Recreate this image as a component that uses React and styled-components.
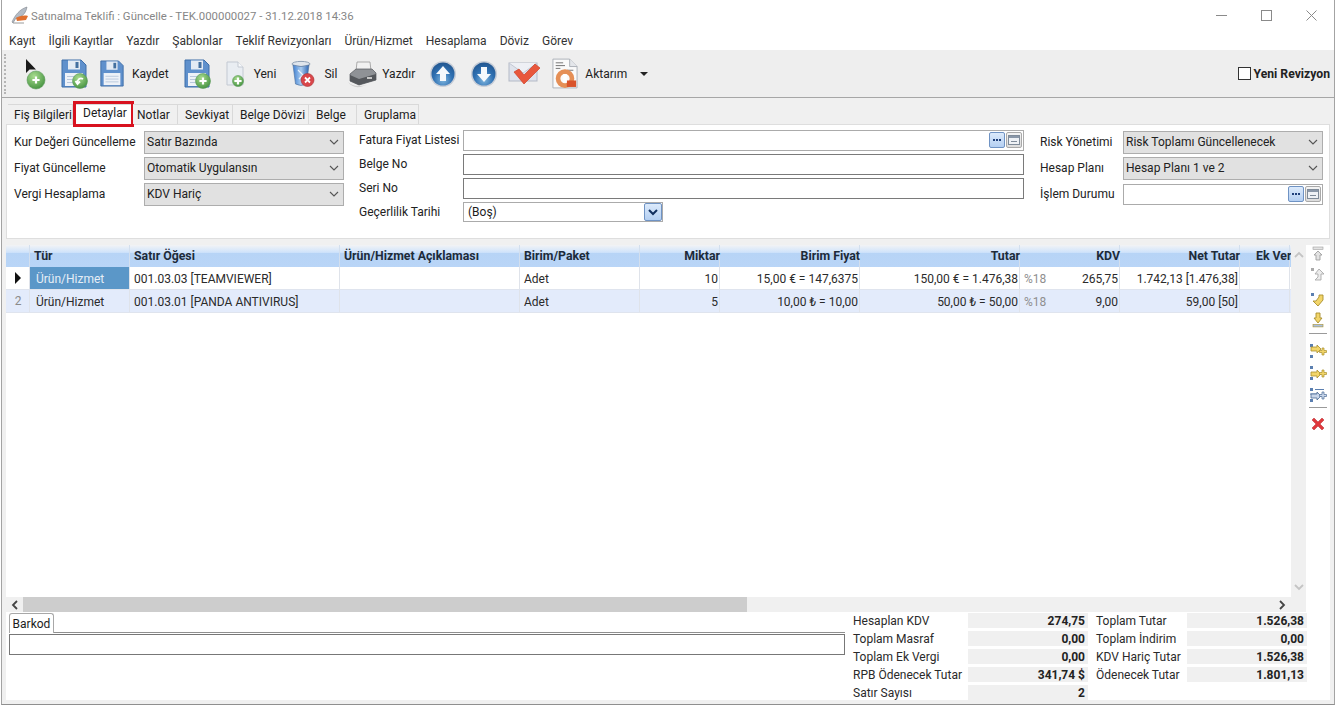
import React from "react";
import styled, { createGlobalStyle } from "styled-components";

const GlobalStyle = createGlobalStyle`
  html, body {
    margin: 0;
    padding: 0;
    background: #fff;
  }
  * {
    box-sizing: border-box;
  }
  body {
    font-family: Roboto, "Noto Sans", sans-serif;
    font-size: 12px;
    color: #1c1c1c;
  }
`;

const Window = styled.div`
  width: 1334px;
  height: 705px;
  margin-left: 1px;
  display: flex;
  flex-direction: column;
  background: #f0f0f0;
  border-left: 1px solid #a3a3a3;
  border-right: 1px solid #a3a3a3;
  border-bottom: 1px solid #8f8f8f;
  overflow: hidden;
`;

const TitleBar = styled.div`
  height: 30px;
  background: #fff;
  display: flex;
  align-items: center;
  padding-left: 9px;
  color: #868686;
  flex: none;
`;

const TitleText = styled.span`
  margin-left: 2px;
  flex: 1;
  font-size: 11.4px;
  padding-top: 1px;
`;

const WinButton = styled.div`
  width: 45px;
  height: 30px;
  display: flex;
  align-items: center;
  justify-content: center;
`;

const MenuBar = styled.div`
  height: 20px;
  background: #fff;
  display: flex;
  align-items: center;
  gap: 13px;
  padding: 2px 0 0 7px;
  flex: none;
  color: #333;
`;

const ToolBar = styled.div`
  height: 48px;
  background: #eeeeee;
  border-bottom: 1px solid #a6a6a6;
  display: flex;
  align-items: center;
  padding: 0 4px 0 2px;
  flex: none;
`;

const Grip = styled.div`
  width: 2px;
  height: 40px;
  border-left: 2px dotted #b5b5b5;
  margin-right: 19px;
`;

const Tool = styled.div`
  display: flex;
  align-items: center;
  gap: ${(p) => p.$gap || 6}px;
  margin-left: ${(p) => p.$ml || 0}px;
  color: #222;
  line-height: 16px;
`;

const Caret = styled.div`
  width: 0;
  height: 0;
  margin: 0 0 0 13px;
  border-left: 4px solid transparent;
  border-right: 4px solid transparent;
  border-top: 4px solid #222;
`;

const Revision = styled.label`
  margin-left: auto;
  display: flex;
  align-items: center;
  gap: 3px;
  font-size: 12.2px;
  font-weight: 700;
  color: #222;
`;

const CheckBox = styled.span`
  width: 13px;
  height: 13px;
  background: #fff;
  border: 1px solid #333;
`;

const TabStrip = styled.div`
  display: flex;
  height: 20px;
  margin: 6px 0 0 6px;
  flex: none;
`;

const Tab = styled.div`
  position: relative;
  width: ${(p) => p.$w}px;
  display: flex;
  align-items: center;
  padding-left: ${(p) => p.$pl}px;
  background: ${(p) => (p.$active ? "#fff" : "#f0f0f0")};
  border: 1px solid #d9d9d9;
  border-left-width: ${(p) => (p.$active ? 1 : 0)}px;
  border-bottom: none;
  padding-bottom: ${(p) => (p.$active ? 3 : 0)}px;
  ${(p) =>
    p.$active &&
    `&::after {
      content: "";
      position: absolute;
      left: -1px;
      right: -2px;
      top: -4px;
      bottom: -3px;
      border: 3px solid #d8121f;
    }`}
`;

const FormPanel = styled.div`
  height: 115px;
  margin: 0 4px;
  flex: none;
  background: #fff;
  border: 1px solid #dedede;
  display: grid;
  grid-template-columns: 345px 681px 1fr;
  padding: 3px 0 0 7px;
`;

const FormColumn = styled.div`
  display: grid;
  grid-template-columns: ${(p) => p.$label}px ${(p) => p.$field}px;
  grid-auto-rows: ${(p) => p.$row}px;
  align-content: start;
  align-items: center;
  padding-top: ${(p) => p.$top || 0}px;
`;

const FormLabel = styled.div`
  color: #222;
  white-space: nowrap;
`;

const Select = styled.div`
  height: 23px;
  background: #e1e1e1;
  border: 1px solid #adadad;
  display: flex;
  align-items: center;
  justify-content: space-between;
  padding: 0 4px 0 2px;
  color: #222;
`;

const Field = styled.div`
  height: ${(p) => p.$h || 21}px;
  background: #fff;
  border: 1px solid ${(p) => p.$line || "#7a7a7a"};
  display: flex;
  align-items: center;
  justify-content: flex-end;
  gap: 1px;
  padding-right: 1px;
`;

const DateSelect = styled.div`
  width: 200px;
  height: 20px;
  background: #fff;
  border: 1px solid #ababab;
  display: flex;
  align-items: center;
  justify-content: space-between;
  padding-left: 4px;
`;

const BlueButton = styled.div`
  width: ${(p) => p.$w || 16}px;
  height: ${(p) => p.$h || 16}px;
  background: linear-gradient(#dceafb, #b4cff2);
  border: 1px solid #6f93c4;
  border-radius: 2px;
  display: flex;
  align-items: center;
  justify-content: center;
`;

const GreyButton = styled.div`
  width: 16px;
  height: 16px;
  background: linear-gradient(#f4f4f4, #dcdcdc);
  border: 1px solid #a9a9a9;
  border-radius: 2px;
  display: flex;
  align-items: center;
  justify-content: center;
`;

const GridArea = styled.div`
  flex: 1;
  margin: 6px 4px 0;
  min-height: 0;
  display: flex;
  background: #fff;
`;

const GridMain = styled.div`
  flex: 1;
  min-width: 0;
  display: flex;
  flex-direction: column;
`;

const GridBody = styled.div`
  flex: 1;
  min-height: 0;
  display: flex;
`;

const Table = styled.div`
  flex: 1;
  min-width: 0;
  overflow: hidden;
`;

const Row = styled.div`
  display: grid;
  grid-template-columns: 24px 100px 210px 180px 120px 80px 140px 160px 100px 120px 50px;
  height: ${(p) => p.$h}px;
  background: ${(p) => p.$bg};
  border-bottom: ${(p) => (p.$head ? "none" : "1px solid #dfe4ee")};
`;

const HeadCell = styled.div`
  font-size: 12.3px;
  font-weight: 700;
  color: #1d2b3a;
  padding: 2px 0 0 ${(p) => p.$pl || 4}px;
  text-align: ${(p) => (p.$right ? "right" : "left")};
  box-shadow: inset -1px 0 #d3dfee;
  line-height: 18px;
  white-space: nowrap;
`;

const Cell = styled.div`
  display: flex;
  align-items: center;
  justify-content: ${(p) => (p.$right ? "flex-end" : p.$split ? "space-between" : "flex-start")};
  padding: 1px 2px 0 ${(p) => p.$pl || 4}px;
  box-shadow: inset -1px 0 #dfe3ea;
  white-space: nowrap;
  color: ${(p) => (p.$selected ? "#e6eef6" : "#2a2a2a")};
  background: ${(p) => (p.$selected ? "#5b97c8" : "transparent")};
`;

const RowHeader = styled(Cell)`
  justify-content: center;
  color: #8a8a8a;
  padding: 0;
`;

const Muted = styled.span`
  color: #8f8f8f;
`;

const Arrow = styled.div`
  width: 0;
  height: 0;
  border-top: 6px solid transparent;
  border-bottom: 6px solid transparent;
  border-left: 6px solid #111;
`;

const VScroll = styled.div`
  width: 15px;
  background: #f0f0f0;
  flex: none;
  display: flex;
  flex-direction: column;
  justify-content: space-between;
  align-items: center;
  padding: 5px 0;
`;

const HScroll = styled.div`
  height: 15px;
  background: #f0f0f0;
  flex: none;
  display: flex;
  align-items: center;
  padding-right: 16px;
`;

const ScrollEnd = styled.div`
  width: 17px;
  flex: none;
  display: flex;
  justify-content: center;
`;

const ScrollTrack = styled.div`
  flex: 1;
  height: 15px;
`;

const ScrollThumb = styled.div`
  width: 724px;
  height: 15px;
  background: #cdcdcd;
`;

const SideBar = styled.div`
  width: 24px;
  flex: none;
  display: flex;
  flex-direction: column;
  align-items: center;
  padding-top: 1px;
`;

const SideIcon = styled.div`
  width: 18px;
  height: 16px;
  margin-top: ${(p) => p.$mt || 0}px;
  display: flex;
  justify-content: center;
`;

const SideRule = styled.div`
  width: 18px;
  height: 1px;
  background: #9a9a9a;
  margin-top: ${(p) => p.$mt}px;
`;

const Bottom = styled.div`
  height: 88px;
  flex: none;
  margin: 0 4px 4px;
  background: #fff;
  display: flex;
  padding: 1px 0 0 3px;
`;

const BarcodeArea = styled.div`
  width: 836px;
  flex: none;
`;

const BarcodeTabs = styled.div`
  height: 20px;
  border-bottom: 1px solid #8f8f8f;
`;

const BarcodeTab = styled.div`
  width: 45px;
  height: 20px;
  background: #fff;
  border: 1px solid #a8a8a8;
  border-bottom: none;
  border-radius: 3px 3px 0 0;
  display: flex;
  align-items: center;
  justify-content: center;
`;

const BarcodeInput = styled.div`
  height: 21px;
  margin-top: 1px;
  border: 1px solid #777;
`;

const Summary = styled.div`
  margin-left: 5px;
  display: grid;
  grid-template-columns: 118px 120px 99px 120px;
  grid-auto-rows: 15px;
  row-gap: 3px;
`;

const SumLabel = styled.div`
  padding: 1px 0 0 ${(p) => p.$pl || 3}px;
  line-height: 15px;
  white-space: nowrap;
  color: #2a2a2a;
`;

const SumValue = styled.div`
  background: #f0f0f0;
  font-weight: 700;
  text-align: right;
  padding-right: 3px;
  line-height: 16px;
  color: #222;
`;

const FeatherIcon = () => (
  <svg width="18" height="18" viewBox="0 0 18 18">
    <path d="M1 16 C4 9 9 3 16 1 C15 6 13 9 9 11 L5 12 L2 17 Z" fill="#b4bcc6" stroke="#7d838a" strokeWidth=".6" />
    <path d="M5 12 C8 10 13 9 17 10 L15 14 L6 15 Z" fill="#e0702f" />
    <path d="M2 17 H13" stroke="#9a9a9a" />
  </svg>
);

const Chevron = ({ color = "#555", up, right, left, size = 10, width = 1.1 }) => {
  const d = up
    ? "M1 7 L5 3 L9 7"
    : right
      ? "M3 1 L7 5 L3 9"
      : left
        ? "M7 1 L3 5 L7 9"
        : "M1 3 L5 7 L9 3";
  return (
    <svg width={size} height={size} viewBox="0 0 10 10">
      <path d={d} fill="none" stroke={color} strokeWidth={width} />
    </svg>
  );
};

const Badge = ({ cx = 24, cy = 24, r = 7, id, kind = "plus" }) => (
  <g>
    <defs>
      <radialGradient id={id} cx=".4" cy=".3" r=".8">
        <stop offset="0" stopColor="#a8dc8e" />
        <stop offset="1" stopColor="#3d8c3a" />
      </radialGradient>
    </defs>
    <circle cx={cx} cy={cy} r={r} fill={`url(#${id})`} stroke="#5d9a5a" strokeWidth=".6" />
    {kind === "plus" ? (
      <path d={`M${cx - 3.6} ${cy} H${cx + 3.6} M${cx} ${cy - 3.6} V${cy + 3.6}`} stroke="#fff" strokeWidth="2.2" />
    ) : (
      <path
        d={`M${cx + 3} ${cy - 2} C${cx} ${cy - 4} ${cx - 3} ${cy - 1} ${cx - 2.5} ${cy + 2} M${cx - 4.5} ${cy} L${cx - 2.5} ${cy + 3} L${cx} ${cy + 0.5}`}
        fill="none"
        stroke="#fff"
        strokeWidth="1.8"
      />
    )}
  </g>
);

const CursorAddIcon = () => (
  <svg width="22" height="32" viewBox="0 0 22 32">
    <path d="M1 1 L1 15 L4.5 11.5 L11 11.5 Z" fill="#1a1a1a" />
    <Badge cx={11} cy={22} r={9} id="cursorBadge" />
  </svg>
);

const SaveIcon = ({ badge, id, width = 28 }) => (
  <svg width={width} height="31" viewBox="0 0 28 31">
    <path d="M2 2 H21 L26 7 V29 H2 Z" fill="#5f90cc" stroke="#3f6ea8" strokeWidth="1" />
    <rect x="8" y="2.5" width="12" height="9" fill="#e4ebf4" />
    <rect x="15.5" y="4" width="3" height="6" fill="#44709f" />
    <rect x="5" y="15" width="18" height="13" fill="#eef2f8" />
    <path d="M7 18.5 H21 M7 21.5 H21 M7 24.5 H21" stroke="#b9c8dc" strokeWidth="1" />
    {badge && <Badge cx={20} cy={23} r={7.5} id={id} kind={badge} />}
  </svg>
);

const PageAddIcon = () => (
  <svg width="20" height="30" viewBox="0 0 20 30">
    <path d="M2 3 H13 L18 8 V26 H2 Z" fill="#e9edf2" stroke="#c3c9d2" />
    <path d="M13 3 V8 H18" fill="#f8f9fb" stroke="#c3c9d2" />
    <Badge cx={13} cy={22} r={5.5} id="pageBadge" />
  </svg>
);

const TrashIcon = () => (
  <svg width="24" height="30" viewBox="0 0 24 30">
    <defs>
      <linearGradient id="binFill" x1="0" x2="1" y1="0" y2="0">
        <stop offset="0" stopColor="#3f7fd0" />
        <stop offset=".5" stopColor="#a9ccf0" />
        <stop offset="1" stopColor="#2f66b2" />
      </linearGradient>
    </defs>
    <ellipse cx="10" cy="5" rx="9" ry="2.6" fill="#dfe5ec" stroke="#8fa0b4" />
    <path d="M2 6 L4.5 25 Q10 28 15.5 25 L18 6 Q10 9 2 6 Z" fill="url(#binFill)" stroke="#4f6f98" strokeWidth=".6" />
    <path d="M7 11 L12 16 L8 20" fill="none" stroke="#e8f2fc" strokeWidth="1.2" />
    <circle cx="16.5" cy="21" r="6.5" fill="#d9464a" stroke="#a73034" strokeWidth=".6" />
    <path d="M14 18.5 L19 23.5 M19 18.5 L14 23.5" stroke="#fff" strokeWidth="1.8" />
  </svg>
);

const PrinterIcon = () => (
  <svg width="31" height="28" viewBox="0 0 31 28">
    <path d="M10 2 H23 L24 11 H9 Z" fill="#f1f1f1" stroke="#8d8d8d" strokeWidth=".7" />
    <path d="M3 14 L9 9 H25 L29 13 V20 L12 25 L3 21 Z" fill="#8f9296" stroke="#55585c" strokeWidth=".7" />
    <path d="M3 15 L12 19 L29 14 V20 L12 25 L3 21 Z" fill="#55585c" />
    <path d="M1 22 Q7 28 20 25 L13 27 Q5 28 1 22 Z" fill="#cfcfcf" />
    <rect x="20" y="17" width="5" height="2" fill="#c8c8c8" />
  </svg>
);

const OrbIcon = ({ id, down }) => (
  <svg width="28" height="28" viewBox="0 0 28 28">
    <defs>
      <radialGradient id={id} cx=".5" cy=".75" r=".75">
        <stop offset="0" stopColor="#7fb6df" />
        <stop offset=".55" stopColor="#2f70b2" />
        <stop offset="1" stopColor="#22568f" />
      </radialGradient>
    </defs>
    <circle cx="14" cy="14" r="13" fill="#c6ccd6" />
    <circle cx="14" cy="14" r="11.5" fill={`url(#${id})`} />
    <path
      d={down ? "M11 7 H17 V14 H21 L14 22 L7 14 H11 Z" : "M11 21 H17 V14 H21 L14 6 L7 14 H11 Z"}
      fill="#f6f9fc"
    />
  </svg>
);

const CheckMailIcon = () => (
  <svg width="33" height="30" viewBox="0 0 33 30">
    <rect x="1" y="4" width="28" height="18" fill="#dfe3ec" stroke="#b3b9c6" />
    <path d="M1 4 L15 14 L29 4" fill="#eef0f5" stroke="#c3c8d3" />
    <path d="M6 13 L16 25 L32 9 L27 5 L16 16 L11 10 Z" fill="#e8573c" stroke="#cf4028" strokeWidth=".7" />
  </svg>
);

const ExportIcon = () => (
  <svg width="26" height="33" viewBox="0 0 28 33">
    <path d="M1 1 H19 L27 9 V32 H1 Z" fill="#fafafa" stroke="#a9aeb6" />
    <path d="M19 1 V9 H27" fill="#e4e6ea" stroke="#a9aeb6" />
    <path d="M4 5 H12 M4 8 H14 M4 11 H9 M16 13 H23" stroke="#6d6d6d" strokeWidth="1" />
    <circle cx="14" cy="22" r="7.5" fill="none" stroke="#e58f56" strokeWidth="5" />
    <path d="M16 24 H26 V31 H16 Z" fill="#d9532a" />
    <path d="M12 17 H16 V26 H12 Z" fill="#fff" opacity=".85" />
  </svg>
);

const CalendarGlyph = () => (
  <svg width="12" height="10" viewBox="0 0 12 10">
    <rect x=".5" y=".5" width="11" height="9" fill="#eef1f5" stroke="#7f8b99" />
    <rect x="1" y="1" width="10" height="2" fill="#8a97a8" />
    <path d="M3 6.5 H9" stroke="#7f8b99" />
  </svg>
);

const Dots = () => (
  <svg width="10" height="4" viewBox="0 0 10 4">
    <path d="M1 1 h2 v2 h-2z M4 1 h2 v2 h-2z M7 1 h2 v2 h-2z" fill="#1f3f7a" />
  </svg>
);

const MoveIcon = ({ d, rule, fill, stroke, ruleY, ruleFill, dot }) => (
  <svg width="16" height="16" viewBox="0 0 16 16">
    {rule && <rect x="3" y={ruleY} width="10" height="2.4" fill={ruleFill || fill} stroke={stroke} strokeWidth=".6" />}
    {dot && <rect x="1" y="1" width="3" height="3" fill={dot} />}
    <path d={d} fill={fill} stroke={stroke} strokeWidth=".9" />
  </svg>
);

const AddRowIcon = ({ fill, stroke, y = 4, lines }) => (
  <svg width="18" height="16" viewBox="0 0 18 16">
    <rect x="1" y="1" width="3" height="3" fill="#5b7fb0" />
    <rect x="1" y="12" width="3" height="3" fill="#5b7fb0" />
    {lines && <path d="M6 2.5 H15 M1 7 H8" stroke="#5b7fb0" />}
    <path d={`M2 ${y} H8 V${y - 2} L12 ${y + 2} L8 ${y + 6} V${y + 4} H2 Z`} fill={fill} stroke={stroke} strokeWidth=".8" />
    <path d="M13 5 H15 V7.5 H17.5 V9.5 H15 V12 H13 V9.5 H10.5 V7.5 H13 Z" fill={fill} stroke={stroke} strokeWidth=".7" />
  </svg>
);

const DeleteIcon = () => (
  <svg width="14" height="14" viewBox="0 0 14 14">
    <path d="M1 3 L3 1 L7 5 L11 1 L13 3 L9 7 L13 11 L11 13 L7 9 L3 13 L1 11 L5 7 Z" fill="#e0383c" stroke="#b3292c" strokeWidth=".5" />
  </svg>
);

const menuItems = [
  "Kayıt",
  "İlgili Kayıtlar",
  "Yazdır",
  "Şablonlar",
  "Teklif Revizyonları",
  "Ürün/Hizmet",
  "Hesaplama",
  "Döviz",
  "Görev",
];

const tabs = [
  { name: "Fiş Bilgileri", w: 65, pl: 6 },
  { name: "Detaylar", w: 60, pl: 9, active: true },
  { name: "Notlar", w: 45, pl: 4 },
  { name: "Sevkiyat", w: 55, pl: 7 },
  { name: "Belge Dövizi", w: 76, pl: 7 },
  { name: "Belge", w: 48, pl: 7 },
  { name: "Gruplama", w: 62, pl: 7 },
];

const headers = [
  { name: "" },
  { name: "Tür" },
  { name: "Satır Öğesi" },
  { name: "Ürün/Hizmet Açıklaması" },
  { name: "Birim/Paket" },
  { name: "Miktar", right: true },
  { name: "Birim Fiyat", right: true },
  { name: "Tutar", right: true },
  { name: "KDV", right: true },
  { name: "Net Tutar", right: true },
  { name: "Ek Ver", pl: 16 },
];

const rows = [
  {
    code: "001.03.03 [TEAMVIEWER]",
    qty: "10",
    price: "15,00 € = 147,6375",
    total: "150,00 € = 1.476,38",
    vat: "265,75",
    net: "1.742,13 [1.476,38]",
    bg: "#fff",
    selected: true,
  },
  {
    no: "2",
    code: "001.03.01 [PANDA ANTIVIRUS]",
    qty: "5",
    price: "10,00 ₺ = 10,00",
    total: "50,00 ₺ = 50,00",
    vat: "9,00",
    net: "59,00 [50]",
    bg: "#e3ebfb",
  },
];

const summary = [
  ["Hesaplan KDV", "274,75", "Toplam Tutar", "1.526,38"],
  ["Toplam Masraf", "0,00", "Toplam İndirim", "0,00"],
  ["Toplam Ek Vergi", "0,00", "KDV Hariç Tutar", "1.526,38"],
  ["RPB Ödenecek Tutar", "341,74 $", "Ödenecek Tutar", "1.801,13"],
  ["Satır Sayısı", "2"],
];

const headerBg = "linear-gradient(#f2f3f5 0, #cfe3fb 34%, #b7d4f6 35%, #b9d5f7 100%)";

export default function App() {
  return (
    <>
      <GlobalStyle />
      <Window>
        <TitleBar>
          <FeatherIcon />
          <TitleText>Satınalma Teklifi : Güncelle - TEK.000000027 - 31.12.2018 14:36</TitleText>
          <WinButton>
            <svg width="11" height="11" viewBox="0 0 11 11">
              <path d="M0 5.5 H11" stroke="#8a8a8a" />
            </svg>
          </WinButton>
          <WinButton>
            <svg width="11" height="11" viewBox="0 0 11 11">
              <rect x=".5" y=".5" width="10" height="10" fill="none" stroke="#8a8a8a" />
            </svg>
          </WinButton>
          <WinButton>
            <svg width="11" height="11" viewBox="0 0 11 11">
              <path d="M.5 .5 L10.5 10.5 M10.5 .5 L.5 10.5" stroke="#8a8a8a" />
            </svg>
          </WinButton>
        </TitleBar>

        <MenuBar>
          {menuItems.map((item) => (
            <span key={item}>{item}</span>
          ))}
        </MenuBar>

        <ToolBar>
          <Grip />
          <Tool>
            <CursorAddIcon />
          </Tool>
          <Tool $ml={13}>
            <SaveIcon badge="arrow" id="saveBack" />
          </Tool>
          <Tool $ml={11} $gap={7}>
            <SaveIcon width={26} />
            Kaydet
          </Tool>
          <Tool $ml={14}>
            <SaveIcon badge="plus" id="saveNew" />
          </Tool>
          <Tool $ml={14} $gap={9}>
            <PageAddIcon />
            Yeni
          </Tool>
          <Tool $ml={15} $gap={9}>
            <TrashIcon />
            Sil
          </Tool>
          <Tool $ml={10} $gap={4}>
            <PrinterIcon />
            Yazdır
          </Tool>
          <Tool $ml={14}>
            <OrbIcon id="orbUp" />
          </Tool>
          <Tool $ml={13}>
            <OrbIcon id="orbDown" down />
          </Tool>
          <Tool $ml={10}>
            <CheckMailIcon />
          </Tool>
          <Tool $ml={11} $gap={7}>
            <ExportIcon />
            Aktarım
          </Tool>
          <Caret />
          <Revision>
            <CheckBox />
            Yeni Revizyon
          </Revision>
        </ToolBar>

        <TabStrip>
          {tabs.map((tab) => (
            <Tab key={tab.name} $w={tab.w} $pl={tab.pl} $active={tab.active}>
              {tab.name}
            </Tab>
          ))}
        </TabStrip>

        <FormPanel>
          <FormColumn $label={130} $field={200} $row={26} $top={1}>
            <FormLabel>Kur Değeri Güncelleme</FormLabel>
            <Select>
              Satır Bazında
              <Chevron />
            </Select>
            <FormLabel>Fiyat Güncelleme</FormLabel>
            <Select>
              Otomatik Uygulansın
              <Chevron />
            </Select>
            <FormLabel>Vergi Hesaplama</FormLabel>
            <Select>
              KDV Hariç
              <Chevron />
            </Select>
          </FormColumn>

          <FormColumn $label={104} $field={561} $row={24}>
            <FormLabel>Fatura Fiyat Listesi</FormLabel>
            <Field $line="#ababab">
              <BlueButton>
                <Dots />
              </BlueButton>
              <GreyButton>
                <CalendarGlyph />
              </GreyButton>
            </Field>
            <FormLabel>Belge No</FormLabel>
            <Field />
            <FormLabel>Seri No</FormLabel>
            <Field />
            <FormLabel>Geçerlilik Tarihi</FormLabel>
            <DateSelect>
              (Boş)
              <BlueButton $w={18} $h={18}>
                <Chevron color="#12305f" width={2} />
              </BlueButton>
            </DateSelect>
          </FormColumn>

          <FormColumn $label={83} $field={200} $row={26} $top={1}>
            <FormLabel>Risk Yönetimi</FormLabel>
            <Select>
              Risk Toplamı Güncellenecek
              <Chevron />
            </Select>
            <FormLabel>Hesap Planı</FormLabel>
            <Select>
              Hesap Planı 1 ve 2
              <Chevron />
            </Select>
            <FormLabel>İşlem Durumu</FormLabel>
            <Field $line="#ababab">
              <BlueButton>
                <Dots />
              </BlueButton>
              <GreyButton>
                <CalendarGlyph />
              </GreyButton>
            </Field>
          </FormColumn>
        </FormPanel>

        <GridArea>
          <GridMain>
            <GridBody>
              <Table>
                <Row $h={22} $bg={headerBg} $head>
                  {headers.map((h) => (
                    <HeadCell key={h.name} $right={h.right} $pl={h.pl}>
                      {h.name}
                    </HeadCell>
                  ))}
                </Row>
                {rows.map((row) => (
                  <Row key={row.code} $h={23} $bg={row.bg}>
                    <RowHeader>{row.no || <Arrow />}</RowHeader>
                    <Cell $selected={row.selected} $pl={6}>
                      Ürün/Hizmet
                    </Cell>
                    <Cell>{row.code}</Cell>
                    <Cell />
                    <Cell>Adet</Cell>
                    <Cell $right>{row.qty}</Cell>
                    <Cell $right>{row.price}</Cell>
                    <Cell $right>{row.total}</Cell>
                    <Cell $split>
                      <Muted>%18</Muted>
                      {row.vat}
                    </Cell>
                    <Cell $right>{row.net}</Cell>
                    <Cell />
                  </Row>
                ))}
              </Table>
              <VScroll>
                <Chevron up color="#c4c4c4" width={1.8} />
                <Chevron color="#c4c4c4" width={1.8} />
              </VScroll>
            </GridBody>
            <HScroll>
              <ScrollEnd>
                <Chevron left color="#444" width={1.8} />
              </ScrollEnd>
              <ScrollThumb />
              <ScrollTrack />
              <ScrollEnd>
                <Chevron right color="#444" width={1.8} />
              </ScrollEnd>
            </HScroll>
          </GridMain>

          <SideBar>
            <SideIcon>
              <MoveIcon rule ruleY={1} fill="#e3e3e3" stroke="#9f9f9f" d="M8 5 L12 9 H10 V14 H6 V9 H4 Z" />
            </SideIcon>
            <SideIcon $mt={5}>
              <MoveIcon fill="#ececec" stroke="#aaaaaa" dot="#aaaaaa" d="M9 2 L14 7 H11 V13 H5 L8 10 V7 H5 Z" />
            </SideIcon>
            <SideIcon $mt={9}>
              <MoveIcon fill="#f2d56a" stroke="#a98f2c" dot="#5b7fb0" d="M13 3 V8 L8 14 L3 9 H6 L9 5 V3 Z" />
            </SideIcon>
            <SideIcon $mt={4}>
              <MoveIcon rule ruleY={12.5} ruleFill="#a9c0e2" fill="#f2d56a" stroke="#a98f2c" d="M6 1 H10 V6 H12 L8 11 L4 6 H6 Z" />
            </SideIcon>
            <SideRule $mt={5} />
            <SideIcon $mt={9}>
              <AddRowIcon fill="#f2d56a" stroke="#a98f2c" />
            </SideIcon>
            <SideIcon $mt={6}>
              <AddRowIcon fill="#f2d56a" stroke="#a98f2c" y={7} />
            </SideIcon>
            <SideIcon $mt={6}>
              <AddRowIcon fill="#c9d6ea" stroke="#4f6d96" y={7} lines />
            </SideIcon>
            <SideRule $mt={4} />
            <SideIcon $mt={9}>
              <DeleteIcon />
            </SideIcon>
          </SideBar>
        </GridArea>

        <Bottom>
          <BarcodeArea>
            <BarcodeTabs>
              <BarcodeTab>Barkod</BarcodeTab>
            </BarcodeTabs>
            <BarcodeInput />
          </BarcodeArea>
          <Summary>
            {summary.map(([labelA, valueA, labelB, valueB]) => (
              <React.Fragment key={labelA}>
                <SumLabel>{labelA}</SumLabel>
                <SumValue>{valueA}</SumValue>
                {labelB && <SumLabel $pl={8}>{labelB}</SumLabel>}
                {valueB && <SumValue>{valueB}</SumValue>}
              </React.Fragment>
            ))}
          </Summary>
        </Bottom>
      </Window>
    </>
  );
}
